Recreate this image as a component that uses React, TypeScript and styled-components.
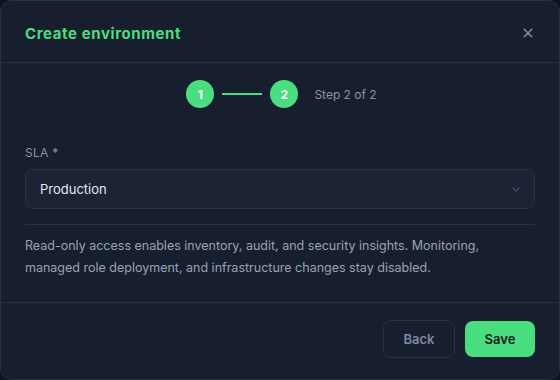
import React from "react";
import styled, { createGlobalStyle } from "styled-components";

const Global = createGlobalStyle`
  html, body { margin: 0; padding: 0; background: #0f1420; }
  * { box-sizing: border-box; }
  body { font-family: Inter, "Noto Sans", sans-serif; }
`;

const Modal = styled.div`
  width: 560px;
  height: 380px;
  background: #171e2e;
  border: 1px solid #273146;
  border-radius: 12px;
  display: flex;
  flex-direction: column;
  overflow: hidden;
`;

const Header = styled.div`
  height: 62px;
  flex: none;
  display: flex;
  align-items: center;
  justify-content: space-between;
  padding: 3px 24px 0 24px;
  border-bottom: 1px solid #273146;
`;

const Title = styled.h2`
  margin: 0;
  font-size: 15px;
  font-weight: 700;
  color: #4ade80;
  letter-spacing: 0.6px;
`;

const CloseButton = styled.button`
  background: none;
  border: none;
  padding: 0;
  width: 14px;
  height: 14px;
  display: flex;
  align-items: center;
  justify-content: center;
  color: #7b869d;
  cursor: pointer;
`;

const Body = styled.div`
  flex: 1;
  padding: 17px 24px 0 24px;
  display: flex;
  flex-direction: column;
`;

const Stepper = styled.div`
  display: flex;
  align-items: center;
  justify-content: center;
  height: 28px;
  padding-left: 3px;
`;

const StepDot = styled.div`
  width: 28px;
  height: 28px;
  border-radius: 50%;
  background: #4ade80;
  color: #ffffff;
  font-size: 12px;
  font-weight: 700;
  display: flex;
  align-items: center;
  justify-content: center;
`;

const StepLine = styled.div`
  width: 40px;
  height: 2px;
  background: #4ade80;
  margin: 0 8px;
`;

const StepText = styled.span`
  margin-left: 16px;
  font-size: 12px;
  color: #8b94a8;
`;

const Label = styled.label`
  margin-top: 37px;
  font-size: 12px;
  line-height: 16px;
  color: #8a93a6;
  letter-spacing: 0.3px;
`;

const Select = styled.div`
  margin-top: 8px;
  height: 40px;
  border: 1px solid #29344a;
  border-radius: 8px;
  background: #1b2335;
  display: flex;
  align-items: center;
  justify-content: space-between;
  padding: 0 14px 0 14px;
  font-size: 13px;
  color: #e2e8f0;
`;

const Divider = styled.hr`
  margin: 15px 0 0 0;
  border: none;
  border-top: 1px solid #273146;
`;

const Description = styled.p`
  margin: 10px 0 0 0;
  font-size: 12.5px;
  line-height: 22px;
  color: #9aa3b5;
`;

const Footer = styled.div`
  height: 77px;
  flex: none;
  border-top: 1px solid #273146;
  display: flex;
  justify-content: flex-end;
  align-items: flex-start;
  gap: 10px;
  padding: 17px 24px 0 24px;
`;

const Button = styled.button<{ $primary?: boolean }>`
  font-family: inherit;
  font-size: 13px;
  font-weight: 600;
  border-radius: 8px;
  cursor: pointer;
  height: ${(p) => (p.$primary ? "36px" : "38px")};
  margin-top: ${(p) => (p.$primary ? "1px" : "0")};
  width: ${(p) => (p.$primary ? "70px" : "72px")};
  border: ${(p) => (p.$primary ? "none" : "1px solid #263147")};
  background: ${(p) => (p.$primary ? "#4ade80" : "transparent")};
  color: ${(p) => (p.$primary ? "#0f1a16" : "#8089a0")};
`;

export default function App() {
  return (
    <>
      <Global />
      <Modal>
        <Header>
          <Title>Create environment</Title>
          <CloseButton aria-label="Close">
            <svg width="10" height="10" viewBox="0 0 10 10">
              <path d="M1.2 1.2L8.8 8.8M8.8 1.2L1.2 8.8" stroke="currentColor" strokeWidth="1.6" strokeLinecap="round" />
            </svg>
          </CloseButton>
        </Header>
        <Body>
          <Stepper>
            <StepDot>1</StepDot>
            <StepLine />
            <StepDot>2</StepDot>
            <StepText>Step 2 of 2</StepText>
          </Stepper>
          <Label>SLA *</Label>
          <Select>
            <span>Production</span>
            <svg width="8" height="5" viewBox="0 0 8 5">
              <path d="M1 1L4 4L7 1" stroke="#465169" strokeWidth="1.3" fill="none" strokeLinecap="round" strokeLinejoin="round" />
            </svg>
          </Select>
          <Divider />
          <Description>
            Read-only access enables inventory, audit, and security insights. Monitoring,
            managed role deployment, and infrastructure changes stay disabled.
          </Description>
        </Body>
        <Footer>
          <Button>Back</Button>
          <Button $primary>Save</Button>
        </Footer>
      </Modal>
    </>
  );
}
